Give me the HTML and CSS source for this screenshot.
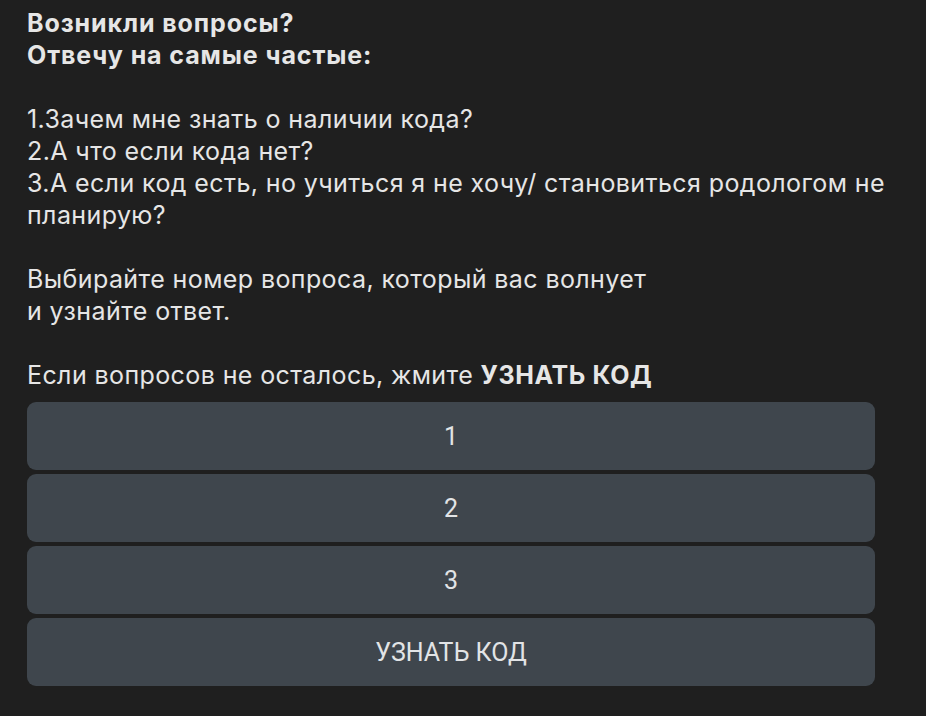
FILE: index.html
```html
<!DOCTYPE html>
<html lang="ru">
<head>
  <meta charset="UTF-8" />
  <meta name="viewport" content="width=device-width, initial-scale=1.0" />
  <title>Возникли вопросы?</title>
  <link rel="stylesheet" href="styles.css">
</head>
<body>
  <div class="message">
    <p class="title">Возникли вопросы?<br>Отвечу на самые частые:</p>

    <p>1.Зачем мне знать о наличии кода?<br>
      2.А что если кода нет?<br>
      3.А если код есть, но учиться я не хочу/ становиться родологом не планирую?</p>

    <p>Выбирайте номер вопроса, который вас волнует<br>и узнайте ответ.</p>

    <p>Если вопросов не осталось, жмите <b>УЗНАТЬ КОД</b></p>
  </div>

  <div class="buttons">
    <button class="btn">1</button>
    <button class="btn">2</button>
    <button class="btn">3</button>
    <button class="btn">УЗНАТЬ КОД</button>
  </div>
</body>
</html>
```

FILE: styles.css
```css
body {
  margin: 0;
  padding: 7px 51px 0 27px;
  background: #1f1f1f;
  color: #e6e6e6;
  font-family: Inter, "Noto Sans", sans-serif;
}
.message {
  margin-right: -18px;
  font-size: 25px;
  line-height: 32px;
  letter-spacing: 0.4px;
}
.message p {
  margin: 0 0 32px 0;
}
.message p:last-child {
  margin-bottom: 0;
}
.title {
  font-weight: bold;
  letter-spacing: 0.9px;
}
.message b {
  font-weight: bold;
  letter-spacing: 0.6px;
}
.buttons {
  display: flex;
  flex-direction: column;
  gap: 4px;
  margin-top: 11px;
}
.btn {
  height: 68px;
  border: none;
  border-radius: 9px;
  background: #3f464d;
  color: #e2e4e6;
  font-family: Roboto, sans-serif;
  font-size: 25px;
  cursor: pointer;
}
.btn:hover {
  background: #465059;
}
```
